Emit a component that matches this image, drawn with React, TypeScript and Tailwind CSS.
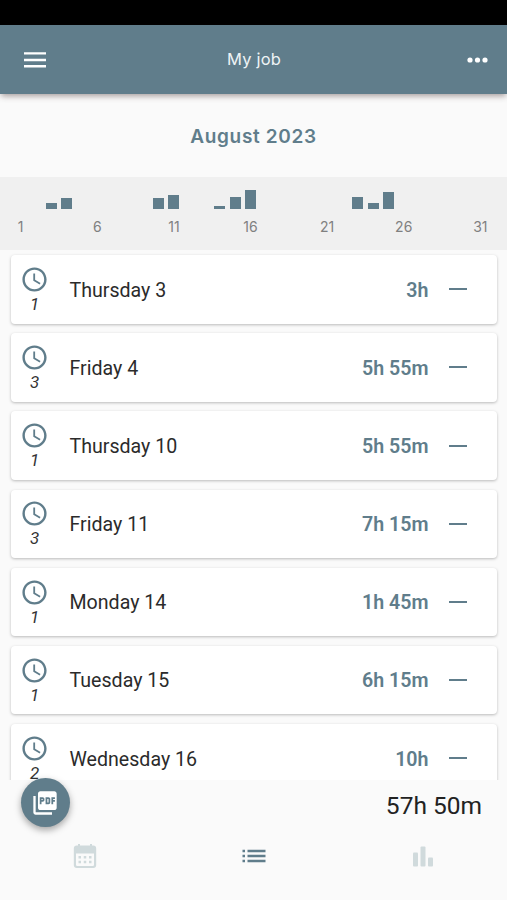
import { MdAccessTime, MdPictureAsPdf } from 'react-icons/md'

const days = [
  { name: 'Thursday 3', entries: 1, time: '3h' },
  { name: 'Friday 4', entries: 3, time: '5h 55m' },
  { name: 'Thursday 10', entries: 1, time: '5h 55m' },
  { name: 'Friday 11', entries: 3, time: '7h 15m' },
  { name: 'Monday 14', entries: 1, time: '1h 45m' },
  { name: 'Tuesday 15', entries: 1, time: '6h 15m' },
  { name: 'Wednesday 16', entries: 2, time: '10h' },
]

// bar height in px, by day of month
const bars: Record<number, number> = {
  3: 6,
  4: 11.5,
  10: 11.5,
  11: 14.3,
  14: 3.5,
  15: 12.2,
  16: 19.3,
  23: 11.6,
  24: 5.7,
  25: 17.3,
}

function Header() {
  return (
    <header className="relative z-10 flex h-[69px] shrink-0 items-center justify-between bg-[#607d8b] pr-[19px] pl-6 text-white shadow-[0_3px_6px_-1px_rgba(60,40,40,0.45)]">
      <svg className="h-4 w-[22px]" viewBox="0 0 22 16" fill="currentColor">
        <path d="M0 0.2h22v2.4H0zM0 6.8h22v2.4H0zM0 13.1h22v2.4H0z" />
      </svg>
      <h1 className="mr-[5px] font-['Inter'] text-[16.5px] tracking-[0.2px] text-[#eef3f5]">
        My job
      </h1>
      <svg className="h-[6px] w-[21px]" viewBox="0 0 21 6" fill="currentColor">
        <circle cx="3" cy="3" r="2.6" />
        <circle cx="10.5" cy="3" r="2.6" />
        <circle cx="18" cy="3" r="2.6" />
      </svg>
    </header>
  )
}

function MonthChart() {
  return (
    <div className="grid h-[73px] shrink-0 grid-cols-[repeat(31,minmax(0,1fr))] bg-[#f0f0f0] pt-3 pr-[19px] pl-[13px]">
      {Array.from({ length: 31 }, (_, i) => i + 1).map((day) => (
        <div key={day} className="flex flex-col items-center">
          <div className="flex h-5 w-[11px] items-end">
            <div
              className="w-full bg-[#607d8b]"
              style={{ height: bars[day] ?? 0 }}
            />
          </div>
          {day % 5 === 1 && (
            <span className="mt-2 font-['Inter'] text-[14px] leading-5 text-[#808080]">
              {day}
            </span>
          )}
        </div>
      ))}
    </div>
  )
}

interface DayCardProps {
  name: string
  entries: number
  time: string
}

function DayCard({ name, entries, time }: DayCardProps) {
  return (
    <div className="flex h-[68.5px] shrink-0 items-center rounded-[4px] bg-white pr-[30px] shadow-[0_1px_3px_rgba(0,0,0,0.26)]">
      <div className="flex w-[48.5px] flex-col items-center">
        <MdAccessTime className="size-[29px] text-[#607d8b]" />
        <span className="text-[17px] leading-5 text-[#333] italic">{entries}</span>
      </div>
      <span className="mt-[2px] ml-[10.5px] text-[19.6px] text-[#2b2b2b]">
        {name}
      </span>
      <span className="mt-[2px] ml-auto text-[19.6px] font-semibold text-[#607d8b]">
        {time}
      </span>
      <div className="ml-[20px] h-[2px] w-[18px] bg-[#607d8b]" />
    </div>
  )
}

function TabBar() {
  return (
    <nav className="grid h-[69px] shrink-0 grid-cols-3 justify-items-center pt-[13px]">
      <svg className="size-6 text-[#d0dadc]" viewBox="0 0 24 24" fill="currentColor">
        <path
          fillRule="evenodd"
          d="M5 0h2v1.5h10V0h2v1.5h1.2a3 3 0 0 1 3 3V21a3 3 0 0 1-3 3H3.8a3 3 0 0 1-3-3V4.5a3 3 0 0 1 3-3H5zM3 9.500v11.300a1.200 1.200 0 0 0 1.200 1.200h15.600a1.200 1.200 0 0 0 1.200-1.200V9.500z"
        />
        <path d="M5.500 12H8v2.500H5.500zM10.750 12h2.500v2.500h-2.500zM16 12h2.500v2.500H16zM5.500 16.700H8v2.500H5.500zM10.750 16.700h2.500v2.500h-2.500zM16 16.700h2.500v2.500H16z" />
      </svg>
      <svg className="size-6 text-[#607d8b]" viewBox="0 0 24 24" fill="currentColor">
        <path d="M0.500 5.700H3v2.500H0.500zM0.500 10.700H3v2.500H0.500zM0.500 15.700H3v2.500H0.500zM5.500 5.700h18v2.500h-18zM5.500 10.700h18v2.500h-18zM5.500 15.700h18v2.500h-18z" />
      </svg>
      <svg className="size-6 text-[#d0dadc]" viewBox="0 0 24 24" fill="currentColor">
        <rect x="2" y="8.5" width="5" height="14" rx="1" />
        <rect x="9.5" y="2.5" width="5" height="20" rx="1" />
        <rect x="17" y="13.5" width="5" height="9" rx="1" />
      </svg>
    </nav>
  )
}

export default function App() {
  return (
    <div className="flex h-[900px] w-[507px] flex-col overflow-hidden bg-[#fafafa] font-['Roboto',sans-serif]">
      <div className="h-[25px] shrink-0 bg-black" />
      <Header />
      <h2 className="flex h-[83px] shrink-0 items-center justify-center pt-[3px] font-['Inter'] text-[19px] font-semibold tracking-[0.65px] text-[#607d8b]">
        August 2023
      </h2>
      <MonthChart />
      <main className="flex h-[530px] shrink-0 flex-col gap-[9.7px] overflow-hidden px-[10.5px] pt-[5px]">
        {days.map((day) => (
          <DayCard key={day.name} {...day} />
        ))}
      </main>
      <div className="relative flex h-[51px] shrink-0 items-center justify-end pt-[2px] pr-[25px] text-[24.5px] text-[#222]">
        <button className="absolute -top-[2px] left-[20.5px] flex size-[49px] items-center justify-center rounded-full bg-[#607d8b] text-white shadow-[0_3px_7px_rgba(0,0,0,0.35)]">
          <MdPictureAsPdf className="size-[28px]" />
        </button>
        57h 50m
      </div>
      <TabBar />
    </div>
  )
}
